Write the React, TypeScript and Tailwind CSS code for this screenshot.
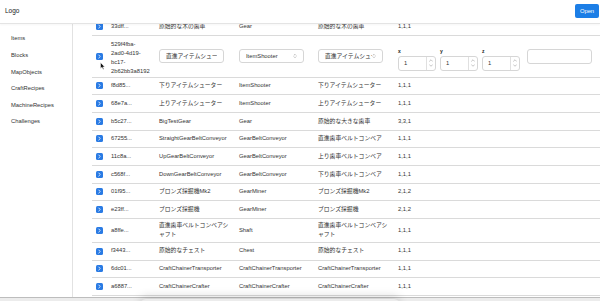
import type { ReactNode } from 'react';

interface Row {
  id: string;
  name: string;
  type: string;
  desc: string;
  size: string;
  tall?: boolean;
}

const rows: Row[] = [
  { id: 'f8d85...', name: '下りアイテムシューター', type: 'ItemShooter', desc: '下りアイテムシューター', size: '1,1,1' },
  { id: '68e7a...', name: '上りアイテムシューター', type: 'ItemShooter', desc: '上りアイテムシューター', size: '1,1,1' },
  { id: 'b5c27...', name: 'BigTestGear', type: 'Gear', desc: '原始的な大きな歯車', size: '3,3,1' },
  { id: '67255...', name: 'StraightGearBeltConveyor', type: 'GearBeltConveyor', desc: '直進歯車ベルトコンベア', size: '1,1,1' },
  { id: '11c8a...', name: 'UpGearBeltConveyor', type: 'GearBeltConveyor', desc: '上り歯車ベルトコンベア', size: '1,1,1' },
  { id: 'c568f...', name: 'DownGearBeltConveyor', type: 'GearBeltConveyor', desc: '下り歯車ベルトコンベア', size: '1,1,1' },
  { id: '01f95...', name: 'ブロンズ採掘機Mk2', type: 'GearMiner', desc: 'ブロンズ採掘機Mk2', size: '2,1,2' },
  { id: 'e23ff...', name: 'ブロンズ採掘機', type: 'GearMiner', desc: 'ブロンズ採掘機', size: '2,1,2' },
  { id: 'a8ffe...', name: '直進歯車ベルトコンベアシャフト', type: 'Shaft', desc: '直進歯車ベルトコンベアシャフト', size: '1,1,1', tall: true },
  { id: 'f3443...', name: '原始的なチェスト', type: 'Chest', desc: '原始的なチェスト', size: '1,1,1' },
  { id: '6dc01...', name: 'CraftChainerTransporter', type: 'CraftChainerTransporter', desc: 'CraftChainerTransporter', size: '1,1,1' },
  { id: 'a6887...', name: 'CraftChainerCrafter', type: 'CraftChainerCrafter', desc: 'CraftChainerCrafter', size: '1,1,1' },
];

const navItems = ['Items', 'Blocks', 'MapObjects', 'CraftRecipes', 'MachineRecipes', 'Challenges'];

const gridCols = 'grid grid-cols-[19px_48px_80px_79px_80px_1fr]';

function ExpandIcon() {
  return (
    <div className="ml-[4px] flex h-[7px] w-[7px] items-center justify-center rounded-[1.5px] bg-[#2a7be4]">
      <svg width="5" height="5" viewBox="0 0 10 10" fill="none">
        <path d="M3.5 2 L6.5 5 L3.5 8" stroke="white" strokeWidth="1.6" strokeLinecap="round" strokeLinejoin="round" />
      </svg>
    </div>
  );
}

function UpDown() {
  return (
    <svg width="4" height="6" viewBox="0 0 8 12" fill="none" className="shrink-0">
      <path d="M2 4.5 L4 2.5 L6 4.5 M2 7.5 L4 9.5 L6 7.5" stroke="#8a8a8a" strokeWidth="1" strokeLinecap="round" strokeLinejoin="round" />
    </svg>
  );
}

function FakeSelect({ value, arrow = true }: { value: string; arrow?: boolean }) {
  return (
    <div className="flex h-[14px] w-[65px] items-center justify-between overflow-hidden rounded-[3px] border border-[#d6d6d6] bg-white pr-[6px] pl-[6px]">
      <span className="overflow-hidden whitespace-nowrap">{value}</span>
      {arrow && <UpDown />}
    </div>
  );
}

function NumberField({ label }: { label: string }) {
  return (
    <div className="flex flex-col">
      <span className="h-[6.5px] text-[5px] leading-[5px] font-semibold text-[#222]">{label}</span>
      <div className="flex h-[15px] w-[38px] items-center overflow-hidden rounded-[3px] border border-[#d6d6d6] bg-white">
        <span className="flex-1 pl-[5px]">1</span>
        <div className="flex h-full w-[9px] flex-col items-center justify-center gap-[2px] border-l border-[#e0e0e0]">
          <svg width="4" height="3" viewBox="0 0 8 5" fill="none">
            <path d="M1 4 L4 1 L7 4" stroke="#8a8a8a" strokeWidth="1" strokeLinecap="round" />
          </svg>
          <svg width="4" height="3" viewBox="0 0 8 5" fill="none">
            <path d="M1 1 L4 4 L7 1" stroke="#8a8a8a" strokeWidth="1" strokeLinecap="round" />
          </svg>
        </div>
      </div>
    </div>
  );
}

function Cell({ children }: { children: ReactNode }) {
  return <div className="pr-[5px]">{children}</div>;
}

export default function App() {
  return (
    <div className="relative flex h-[301px] w-full flex-col overflow-hidden bg-white font-['Liberation_Sans','Noto_Sans_CJK_JP',sans-serif] text-[5.8px] text-[#333]">
      <header className="z-10 flex h-[23.5px] shrink-0 items-center justify-between border-b border-[#e4e4e4] bg-white pr-[1px] pl-[5px] shadow-[0_1px_2px_rgba(0,0,0,0.04)]">
        <span className="text-[6.5px] text-[#222]">Logo</span>
        <button className="h-[14px] w-[24px] rounded-[2px] bg-[#1c7ee6] text-[5.8px] text-white">Open</button>
      </header>

      <div className="flex min-h-0 flex-1">
        <aside className="flex w-[73px] shrink-0 flex-col border-r border-[#e2e2e2] pt-[7px] pl-[11px]">
          {navItems.map((item) => (
            <div key={item} className="flex h-[16.6px] shrink-0 items-center">
              {item}
            </div>
          ))}
        </aside>

        <main className="min-w-0 flex-1 overflow-hidden pl-[19px]">
          <div className="mt-[-5.5px] flex flex-col">
            <div className={`${gridCols} h-[17.67px] shrink-0 items-center border-b border-[#dadada] leading-[9.5px]`}>
              <ExpandIcon />
              <div>33dff...</div>
              <Cell>原始的な木の歯車</Cell>
              <Cell>Gear</Cell>
              <Cell>原始的な木の歯車</Cell>
              <div>1,1,1</div>
            </div>

            <div className={`${gridCols} relative h-[42px] shrink-0 items-start border-b border-[#dadada] leading-[9px]`}>
              <div className="self-center">
                <ExpandIcon />
              </div>
              <div className="flex flex-col pt-[4px]">
                <span>529f4fba-</span>
                <span>2ad0-4d19-</span>
                <span>bc17-</span>
                <span>2b62bb3a8192</span>
              </div>
              <div className="pt-[13.5px]">
                <FakeSelect value="直進アイテムシューター" arrow={false} />
              </div>
              <div className="pt-[13.5px]">
                <FakeSelect value="ItemShooter" />
              </div>
              <div className="pt-[13.5px]">
                <FakeSelect value="直進アイテムシュー" />
              </div>
              <div className="flex items-start pt-[13.5px]">
                <div className="flex gap-[4px]">
                  <NumberField label="x" />
                  <NumberField label="y" />
                  <NumberField label="z" />
                </div>
                <div className="ml-[7px] h-[15px] w-[65px] rounded-[3px] border border-[#d6d6d6] bg-white" />
              </div>
              <svg className="absolute top-[26px] left-[8px]" width="5" height="8" viewBox="0 0 10 16">
                <path d="M1 1 L1 13 L4 10.5 L6.2 15 L8 14.2 L5.8 9.8 L9.5 9.8 Z" fill="#111" stroke="white" strokeWidth="1" />
              </svg>
            </div>

            {rows.map((r) => (
              <div
                key={r.id}
                className={`${gridCols} ${r.tall ? 'h-[24px]' : 'h-[17.67px]'} shrink-0 items-center border-b border-[#dadada] leading-[9.5px]`}
              >
                <ExpandIcon />
                <div>{r.id}</div>
                <Cell>{r.name}</Cell>
                <Cell>{r.type}</Cell>
                <Cell>{r.desc}</Cell>
                <div>{r.size}</div>
              </div>
            ))}
          </div>
        </main>
      </div>

      <div className="h-[4px] shrink-0 border-t border-[#bdbdbd] bg-[#ececec]" />
      <div className="pointer-events-none absolute bottom-[-10px] left-[140px] h-[12px] w-[260px] rounded-full shadow-[0_-3px_10px_rgba(0,0,0,0.14)]" />
    </div>
  );
}
